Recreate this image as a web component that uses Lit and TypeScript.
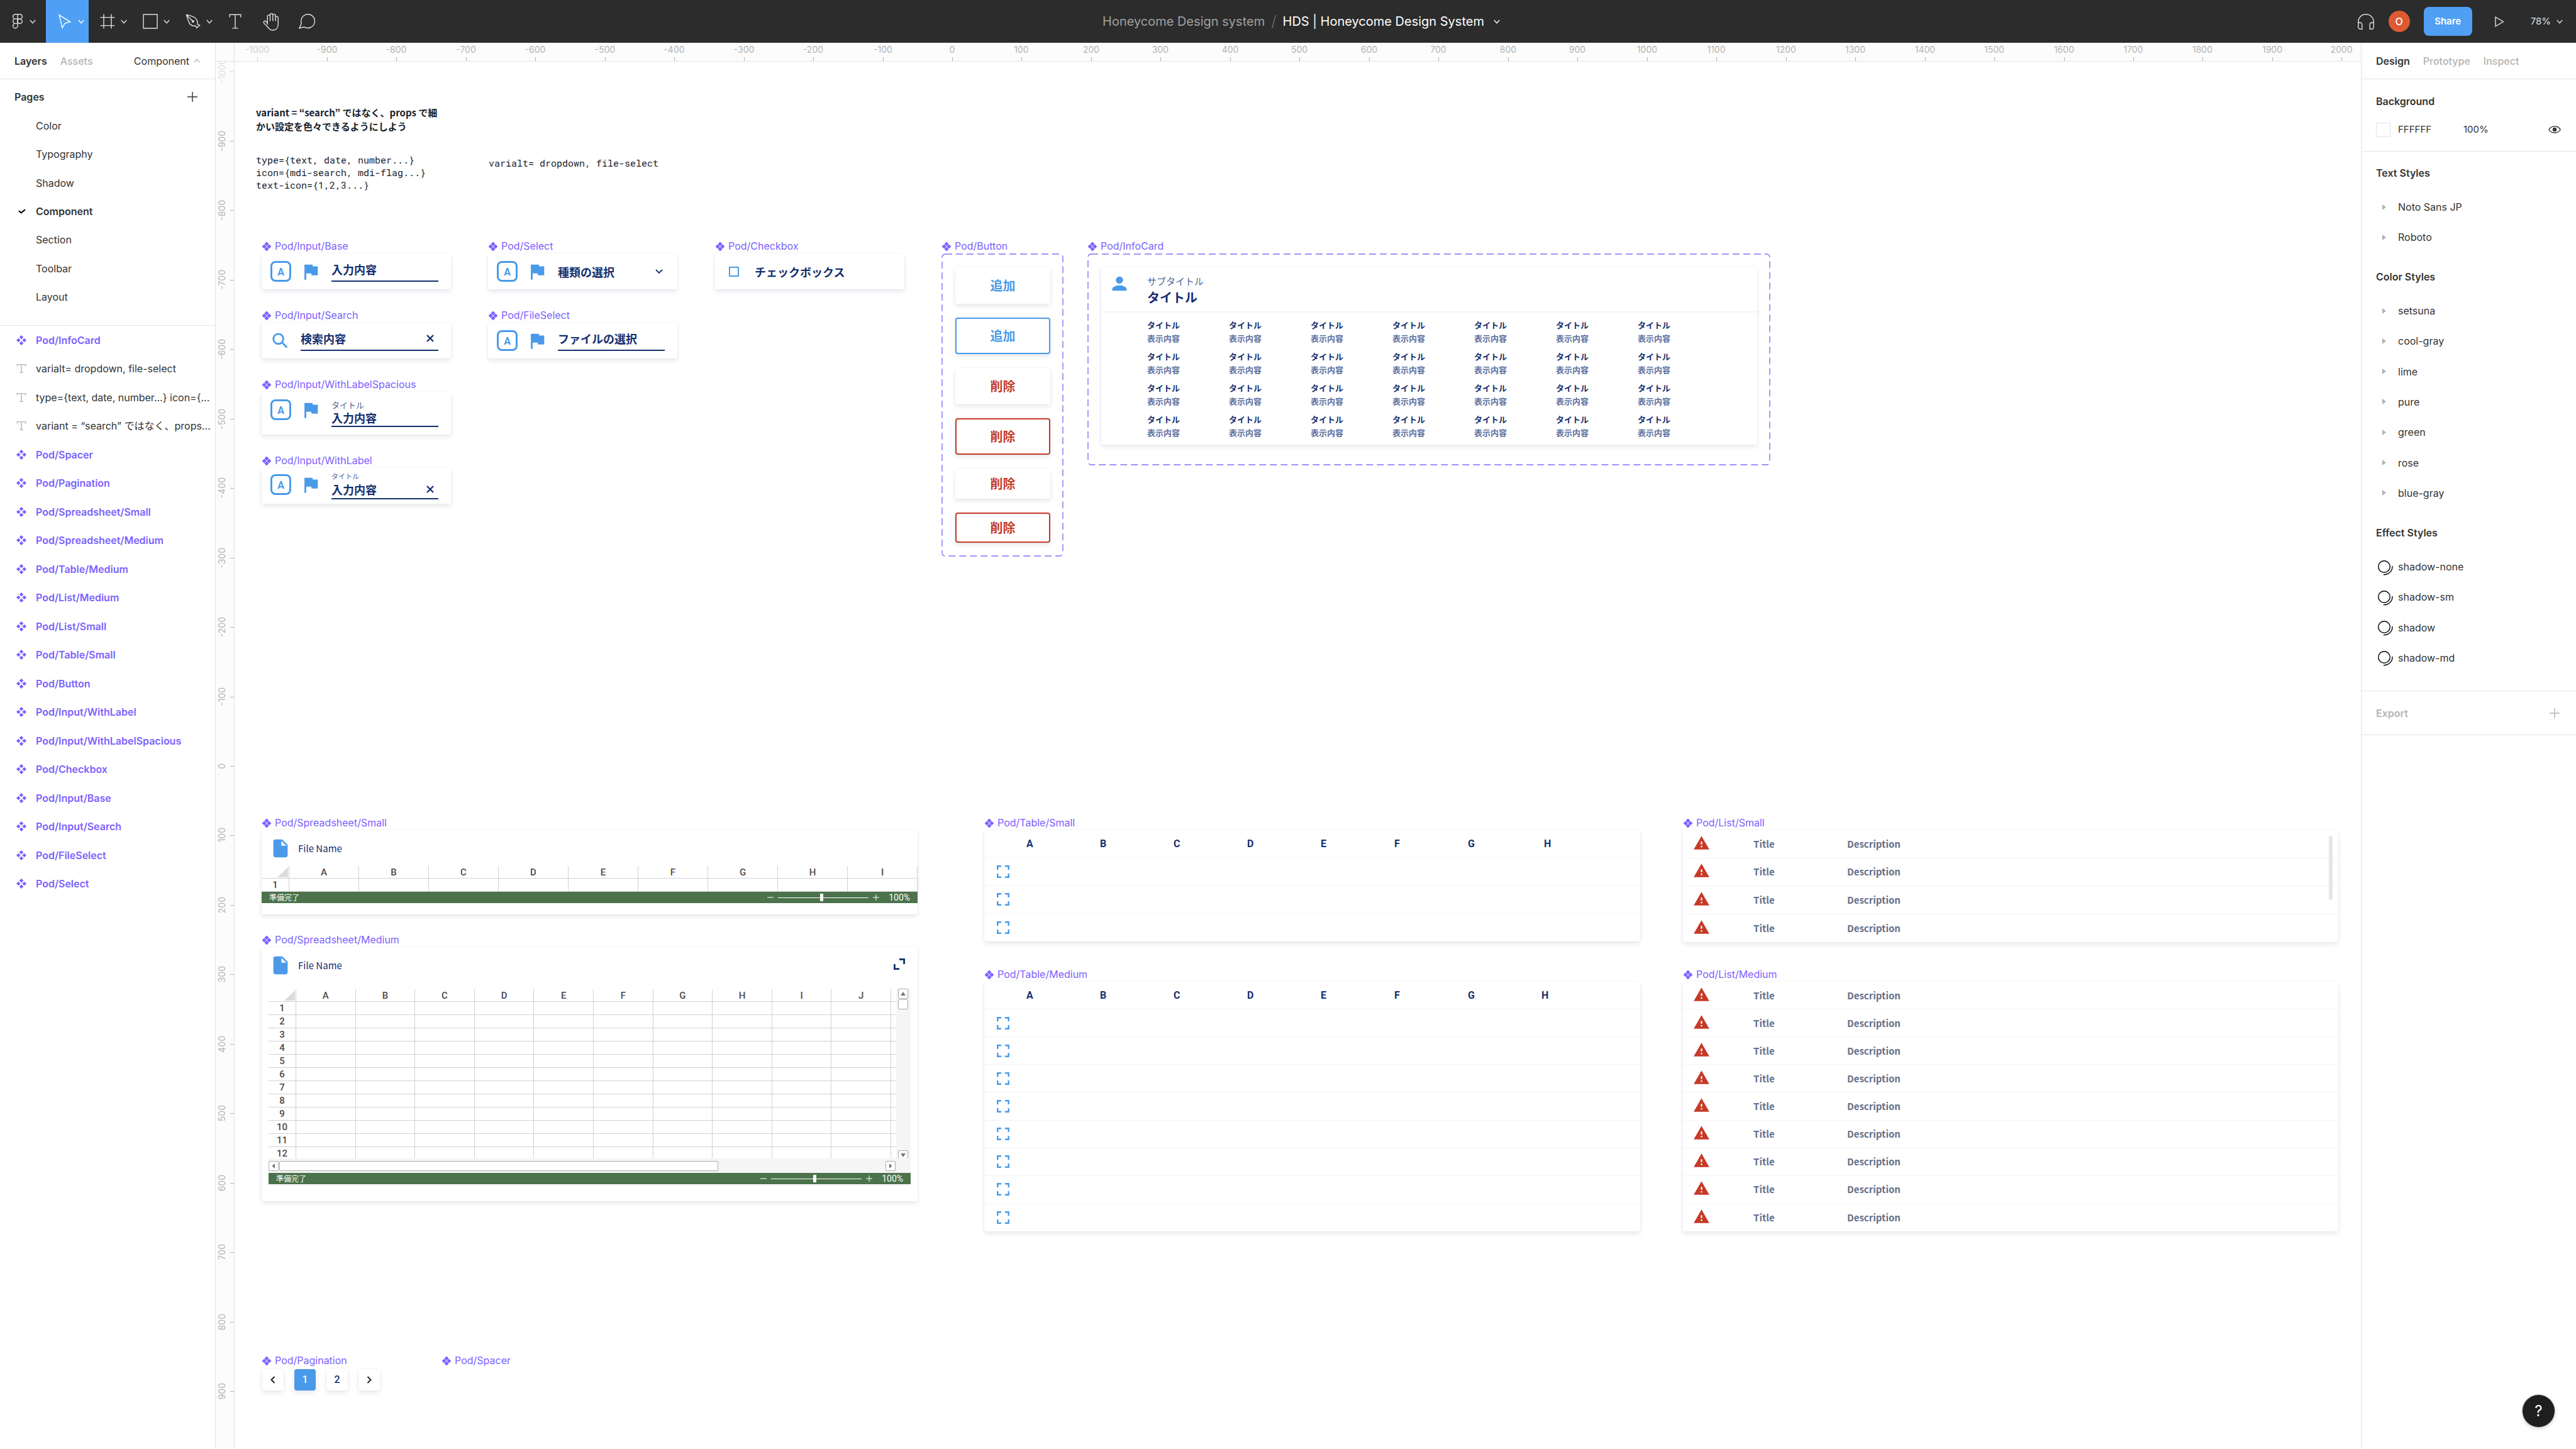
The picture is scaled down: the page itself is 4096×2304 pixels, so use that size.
import { LitElement, html, svg, css, nothing, TemplateResult } from "lit";
import { customElement, property } from "lit/decorators.js";
import { classMap } from "lit/directives/class-map.js";

/* ---------- data ---------- */

const PAGES = ["Color", "Typography", "Shadow", "Component", "Section", "Toolbar", "Layout"];

const LAYERS: { kind: "component" | "text"; name: string }[] = [
  { kind: "component", name: "Pod/InfoCard" },
  { kind: "text", name: "varialt= dropdown, file-select" },
  { kind: "text", name: "type={text, date, number...} icon={..." },
  { kind: "text", name: "variant = “search” ではなく、props..." },
  ...[
    "Spacer", "Pagination", "Spreadsheet/Small", "Spreadsheet/Medium", "Table/Medium",
    "List/Medium", "List/Small", "Table/Small", "Button", "Input/WithLabel",
    "Input/WithLabelSpacious", "Checkbox", "Input/Base", "Input/Search", "FileSelect", "Select",
  ].map((n) => ({ kind: "component" as const, name: `Pod/${n}` })),
];

const TEXT_STYLES = ["Noto Sans JP", "Roboto"];
const COLOR_STYLES = ["setsuna", "cool-gray", "lime", "pure", "green", "rose", "blue-gray"];
const EFFECT_STYLES = ["shadow-none", "shadow-sm", "shadow", "shadow-md"];

/* Canvas units to screen pixels. */
const UNIT = 1.1047;
const ORIGIN_X = 1141;
const ORIGIN_Y = 1120;
const range = (n: number) => Array.from({ length: n }, (_, i) => i);
const X_MARKS = range(31).map((i) => i * 100 - 1000);
const Y_MARKS = range(20).map((i) => i * 100 - 1000);
const letters = (n: number) => range(n).map((i) => String.fromCharCode(65 + i));

/* ---------- icons ---------- */

const diamond = (cx: number, cy: number, r: number) =>
  svg`<path d="M${cx} ${cy - r}L${cx + r} ${cy}L${cx} ${cy + r}L${cx - r} ${cy}Z"></path>`;

const componentIcon = (spread: number, r: number) => html`
  <svg class="ico-component" width="16" height="16" viewBox="0 0 16 16" aria-hidden="true">
    ${diamond(8, 8 - spread, r)}${diamond(8, 8 + spread, r)}${diamond(8 - spread, 8, r)}${diamond(8 + spread, 8, r)}
  </svg>`;

const chevron = html`
  <svg class="line" width="10" height="7" viewBox="0 0 10 7" aria-hidden="true"><path d="M.8 1L5 5.6 9.2 1"></path></svg>`;

const caretUp = html`
  <svg class="line faint" width="10" height="7" viewBox="0 0 10 7" aria-hidden="true"><path d="M.8 6L5 1.2 9.2 6"></path></svg>`;

const plus = html`
  <svg class="line" width="16" height="16" viewBox="0 0 16 16" aria-hidden="true"><path d="M8 0v16M0 8h16"></path></svg>`;

const textGlyph = html`
  <svg class="line faint" width="16" height="16" viewBox="0 0 16 16" aria-hidden="true"><path d="M1.4 4.6V1.6h13.2v3M8 1.6v12.9M5.2 14.4h5.6"></path></svg>`;

const tick = html`
  <svg width="12" height="8" viewBox="0 0 12 8" aria-hidden="true"><path d="M1 3.2l3.6 3.2L11 1.2" fill="none" stroke="#000" stroke-width="2.1"></path></svg>`;

const triangle = html`
  <svg class="tri" width="6" height="9" viewBox="0 0 6 9" aria-hidden="true"><path d="M0 0l6 4.5L0 9z"></path></svg>`;

const effectIcon = html`
  <svg class="line dark" width="24" height="24" viewBox="0 0 24 24" aria-hidden="true">
    <circle cx="10" cy="10" r="9.3"></circle><path d="M22.9 9c.6 7.5-5.400 14-14 13.800"></path>
  </svg>`;

const glyph = (d: string) => html`<svg class="glyph" width="34" height="34" viewBox="0 0 24 24" aria-hidden="true"><path d=${d}></path></svg>`;
const flagIcon = glyph("M14.400 6L14 4H5v17h2v-7h5.600l.400 2h7V6z");
const personIcon = glyph("M12 12c2.210 0 4-1.790 4-4s-1.790-4-4-4-4 1.790-4 4 1.790 4 4 4zm0 2c-2.670 0-8 1.340-8 4v2h16v-2c0-2.660-5.330-4-8-4z");
const fileIcon = glyph("M6 2c-1.100 0-2 .900-2 2v16c0 1.100.900 2 2 2h12c1.100 0 2-.900 2-2V8l-6-6H6zm7 7V3.500L18.500 9H13z");

const searchIcon = html`
  <svg class="search" width="34" height="34" viewBox="0 0 34 34" aria-hidden="true">
    <circle cx="12.600" cy="13.800" r="7.900"></circle><path d="M18.400 19.600l7.200 7.200"></path>
  </svg>`;

const crossIcon = html`
  <svg class="cross" width="12" height="12" viewBox="0 0 12 12" aria-hidden="true"><path d="M1 1l10 10M11 1L1 11"></path></svg>`;

const warnIcon = html`
  <svg class="warn" width="27" height="27" viewBox="0 0 24 24" aria-hidden="true"><path d="M1 21h22L12 2 1 21zm12-3h-2v-2h2v2zm0-4h-2v-4h2v4z"></path></svg>`;

const scanIcon = html`
  <svg class="scan" width="20" height="20" viewBox="0 0 20 20" aria-hidden="true">
    <path d="M1.300 7V1.300H7M13 1.300h5.700V7M18.700 13v5.700H13M7 18.700H1.300V13"></path>
  </svg>`;

const expandIcon = html`
  <svg class="expand" width="18" height="18" viewBox="0 0 18 18" aria-hidden="true"><path d="M9 1.400h7.600V9M1.400 9v7.600H9"></path></svg>`;

const tools: { name: string; icon: TemplateResult; menu: boolean; active?: boolean }[] = [
  {
    name: "Main menu", menu: true,
    icon: html`<svg class="line" width="16" height="24" viewBox="0 0 16 24">
      <path d="M8 .800H4.300a3.600 3.600 0 0 0 0 7.300H8zM8 .800h3.700a3.600 3.600 0 0 1 0 7.300H8M8 8.100H4.300a3.600 3.600 0 0 0 0 7.300H8zM8 15.400H4.300A3.700 3.700 0 1 0 8 19.200z"></path><circle cx="11.600" cy="11.800" r="3.700"></circle></svg>`,
  },
  {
    name: "Move", menu: true, active: true,
    icon: html`<svg class="line" width="24" height="24" viewBox="0 0 24 24"><path d="M3.200 1.800l17.600 11-8.700 2.300L8 22.300z"></path></svg>`,
  },
  {
    name: "Frame", menu: true,
    icon: html`<svg class="line" width="24" height="24" viewBox="0 0 24 24"><path d="M6 .600v22.800M18 .600v22.800M.600 5.600h22.800M.600 18.600h22.800"></path></svg>`,
  },
  {
    name: "Rectangle", menu: true,
    icon: html`<svg class="line" width="24" height="24" viewBox="0 0 24 24"><path d="M1 1h22v22H1z"></path></svg>`,
  },
  {
    name: "Pen", menu: true,
    icon: html`<svg class="line" width="24" height="24" viewBox="0 0 24 24"><path d="M1.200 1.200c4.500 1 8.500 1.800 12.800 4.300 3.600 2.300 5.800 6.300 5 11.200l3.600 1.600-4.700 4.200-1.900-3.400c-5 .700-8-.600-10-4.700C4 10.500 2.800 6 1.200 1.200l9.600 9.800"></path><circle class="fill" cx="11.800" cy="12" r="2"></circle></svg>`,
  },
  {
    name: "Text", menu: false,
    icon: html`<svg class="line" width="20" height="24" viewBox="0 0 20 24"><path d="M1.200 5.500V1.200h17.600v4.300M10 1.200v21.600M5.400 22.900h9.200"></path></svg>`,
  },
  {
    name: "Hand", menu: false,
    icon: html`<svg class="line" width="26" height="29" viewBox="0 0 26 29"><path d="M7.300 19V6a2.100 2.100 0 0 1 4.200 0v7.500M11.500 6V3.200a2.200 2.200 0 0 1 4.300 0v10.300M15.800 4.800a2.100 2.100 0 0 1 4.300 0v9M20.100 8.200a2.100 2.100 0 0 1 4.200 0V18c0 6.300-3.400 10-8.800 10-3.900 0-6-1.900-7.900-5.300l-5.800-5.800c-1.900-2.900 1.700-4.600 3.300-2.700L7.300 17"></path></svg>`,
  },
  {
    name: "Comment", menu: false,
    icon: html`<svg class="line" width="26" height="24" viewBox="0 0 26 24"><path d="M1 22.900l3.300-7.600a10.900 10.900 0 1 1 4.400 5.500z"></path></svg>`,
  },
];

/* ---------- labelled frame on the canvas ---------- */

@customElement("pod-frame")
export class PodFrame extends LitElement {
  @property() name = "";
  @property({ type: Boolean }) dashed = false;

  static styles = css`
    :host { display: block; position: absolute; }
    .label {
      display: flex; align-items: center; gap: 5px; height: 23px; white-space: nowrap;
      font: 400 16px/23px Inter, "Liberation Sans", sans-serif; color: #7b61ff;
    }
    .ico-component { fill: #7b61ff; flex: none; }
    .body { position: relative; }
    .dashes { position: absolute; inset: 0; width: 100%; height: 100%; pointer-events: none; }
    .dashes rect {
      x: 1px; y: 1px; width: calc(100% - 2px); height: calc(100% - 2px);
      fill: none; stroke: #8a6cf5; stroke-width: 1.4px; stroke-dasharray: 11 6;
    }
  `;

  render() {
    return html`
      <div class="label">${componentIcon(3.9, 3.5)}<span>${this.name}</span></div>
      <div class="body">
        <slot></slot>
        ${this.dashed ? html`<svg class="dashes" aria-hidden="true"><rect rx="5"></rect></svg>` : nothing}
      </div>`;
  }
}

/* ---------- page ---------- */

@customElement("app-root")
export class AppRoot extends LitElement {
  static styles = css`
    :host {
      --ink: #333; --faint: #b3b3b3; --rule: #e3e3e3; --accent: #4f9ff5; --blue: #4a9ae9;
      --navy: #142f6e; --slate: #4f6496; --red: #c63a28; --violet: #7b61ff;
      display: grid; grid-template-rows: 68px minmax(0, 1fr); height: 100vh; overflow: hidden;
      background: #fff; color: var(--ink);
      font: 400 16px/24px Inter, "Noto Sans CJK JP", sans-serif;
    }
    * { box-sizing: border-box; }
    svg { display: block; flex: none; }
    button, input, select { font: inherit; color: inherit; border: 0; background: none; padding: 0; margin: 0; border-radius: 0; }
    button { cursor: pointer; }
    ul { list-style: none; margin: 0; padding: 0; }
    h2 { margin: 0; font-size: 16px; font-weight: 600; line-height: 22px; }
    .line { fill: none; stroke: currentColor; stroke-width: 1.4; }
    .line .fill { fill: currentColor; stroke: none; }
    .faint { color: var(--faint); }
    .dark { color: #000; }

    /* top bar */
    .topbar { display: grid; grid-template-columns: 1fr auto 1fr; background: #2c2c2c; color: #e0e0e0; }
    .tools { display: flex; }
    .tool { display: flex; align-items: center; justify-content: center; gap: 9px; width: 57px; height: 68px; }
    .tool.menu { width: 68px; padding-left: 11px; }
    .tool.main { width: 73px; gap: 11px; padding-left: 3px; }
    .tool.active { background: var(--accent); color: #fff; }
    .title { display: flex; align-items: center; gap: 10px; padding-left: 42px; font-size: 20px; }
    .crumb { color: #a0a0a0; text-decoration: none; }
    .slash { color: #6e6e6e; font-size: 24px; font-weight: 300; }
    .file { display: flex; align-items: center; gap: 15px; color: #fff; }
    .session { display: flex; align-items: center; justify-content: flex-end; padding-right: 21px; }
    .avatar { display: grid; place-items: center; width: 34px; height: 34px; margin: 0 22px 0 23px; border-radius: 50%; background: #dd5a33; color: #fff; font-size: 16px; font-weight: 500; }
    .share { width: 77px; height: 46px; border-radius: 8px; background: var(--accent); color: #fff; font-size: 15px; font-weight: 600; }
    .play { margin: 0 42px 0 36px; }
    .zoom { display: flex; align-items: center; gap: 9px; font-size: 15px; }

    .workspace { display: grid; grid-template-columns: 343px minmax(0, 1fr) 342px; min-height: 0; }

    /* left panel */
    .left { border-right: 1px solid var(--rule); min-width: 0; }
    .tabs { display: flex; align-items: center; height: 58px; padding: 0 24px 0 23px; gap: 21px; border-bottom: 1px solid var(--rule); color: var(--faint); font-weight: 500; }
    .tabs .on { color: var(--ink); font-weight: 600; }
    .page-pick { display: flex; align-items: center; gap: 7px; margin-left: auto; color: var(--ink); font-weight: 400; }
    .pages-head { display: flex; align-items: center; justify-content: space-between; height: 51px; padding: 5px 28px 0 23px; }
    .pages { display: grid; grid-auto-rows: 1fr; height: 341px; padding-bottom: 22px; border-bottom: 1px solid var(--rule); }
    .layers { display: grid; grid-auto-rows: 1fr; height: 910px; }
    .row { display: grid; grid-template-columns: 33px minmax(0, 1fr); align-items: center; width: 100%; height: 100%; padding: 0 6px 0 24px; text-align: left; }
    .row-icon { display: flex; align-items: center; padding-left: 2px; }
    .row-icon.check { padding-left: 5px; }
    .row-name { overflow: hidden; text-overflow: ellipsis; white-space: nowrap; }
    .row.current { font-weight: 600; }
    .row.component { color: var(--violet); font-weight: 600; }
    .ico-component { fill: var(--violet); }

    /* canvas and rulers */
    .canvas { display: grid; grid-template: 30px minmax(0, 1fr) / 30px minmax(0, 1fr); min-width: 0; min-height: 0; }
    .ruler { position: relative; overflow: hidden; background: #fcfcfc; color: var(--faint); font-size: 14px; line-height: 16px; }
    .corner, .ruler.x { border-bottom: 1px solid var(--rule); }
    .corner, .ruler.y { border-right: 1px solid var(--rule); }
    .corner { background: #fcfcfc; }
    .mark { position: absolute; display: flex; align-items: center; justify-content: space-between; }
    .ruler.x .mark { top: 3px; bottom: 0; width: 60px; margin-left: -30px; flex-direction: column; }
    .ruler.x .mark::after { content: ""; width: 1px; height: 6px; background: #b0b0b0; }
    .ruler.y .mark { left: 2px; right: 0; height: 60px; margin-top: -30px; }
    .ruler.y .mark::after { content: ""; width: 6px; height: 1px; background: #b0b0b0; }
    .ruler.y .mark span { writing-mode: vertical-rl; transform: rotate(180deg); }
    .mark.dim { opacity: 0.6; }
    .ruler.y .mark.dim { opacity: 0.4; }
    .board { position: relative; overflow: hidden; font-family: "Noto Sans CJK JP", sans-serif; }
    .note { position: absolute; margin: 0; white-space: pre; color: #161e2e; font-size: 15px; line-height: 20px; }
    .note.head { font-weight: 700; line-height: 22px; }
    .note.mono { font-family: "Roboto Mono", "DejaVu Sans Mono", "Liberation Mono", monospace; }

    .card { background: #fff; border-radius: 4px; box-shadow: 0 4px 7px rgba(23, 43, 87, 0.09), 0 0 4px rgba(23, 43, 87, 0.05); }

    /* fields */
    .field-card { display: flex; align-items: center; gap: 16px; height: 57px; padding: 0 20px 0 14px; color: var(--navy); font-size: 18px; font-weight: 700; }
    .field-card.spacious { height: 68px; align-items: flex-start; padding-top: 12px; }
    .field-card.labelled { align-items: flex-start; padding-top: 10px; }
    .badge { display: grid; place-items: center; flex: none; width: 33px; height: 33px; margin-right: -2px; padding-top: 2px; border: 3px solid var(--blue); border-radius: 8px; color: var(--blue); font: 700 16px/18px Roboto, sans-serif; }
    .glyph { fill: var(--blue); }
    .search { fill: none; stroke: var(--blue); stroke-width: 2.8; stroke-linecap: round; margin-right: -2px; }
    .cross { fill: none; stroke: var(--navy); stroke-width: 2.3; }
    .field { display: flex; align-items: center; flex: 1; min-width: 0; height: 33px; padding: 0 7px 5px 0; border-bottom: 2px solid var(--navy); text-align: left; }
    .field input { flex: 1; min-width: 0; width: 0; line-height: 24px; }
    .stack { display: flex; flex-direction: column; flex: 1; min-width: 0; }
    .stack label { color: var(--slate); font-weight: 400; font-size: 13px; line-height: 17px; }
    .stack .field { flex: none; height: 27px; padding-bottom: 1px; }
    .labelled .stack { margin-top: -5px; }
    .labelled .stack label { font-size: 11px; line-height: 16px; }
    .labelled .stack .field { height: 29px; padding-bottom: 2px; }
    .select-wrap { position: relative; display: flex; align-items: center; flex: 1; }
    .select-wrap select { appearance: none; width: 100%; font-weight: 700; }
    .select-wrap svg { position: absolute; right: 3px; stroke: var(--navy); stroke-width: 1.8; pointer-events: none; }
    .check-card { gap: 25px; padding-left: 22px; }
    .check-card input { appearance: none; width: 16px; height: 16px; border: 2px solid var(--blue); border-radius: 1px; }

    /* buttons */
    .button-set { display: flex; flex-direction: column; gap: 22px; padding: 22px 21px 22px 22px; }
    .pod-button { height: 58px; border-radius: 4px; font-size: 20px; font-weight: 700; color: var(--blue); }
    .pod-button.danger { color: var(--red); }
    .pod-button.outlined { border: 2px solid currentColor; }
    .pod-button.short { height: 48px; }

    /* info card */
    .info-wrap { padding: 22px 21px 33px 22px; }
    .info-head { display: flex; gap: 27px; height: 72px; padding: 9px 12px 0; border-bottom: 2px solid #f3f4f6; }
    .info-sub { color: var(--slate); font-size: 15px; line-height: 26px; }
    .info-title { color: #1b2a73; font-size: 20px; line-height: 26px; font-weight: 700; }
    .info-grid { display: grid; grid-template-columns: repeat(7, 130px); row-gap: 8px; margin: 0; padding: 9px 0 9px 73px; font-size: 13px; line-height: 21px; font-weight: 700; }
    .info-grid dt { color: var(--navy); }
    .info-grid dd { margin: 0; color: #5c70a0; }

    /* spreadsheets */
    .sheet { padding-bottom: 18px; }
    .sheet.medium { padding: 0 11px 27px; }
    .file-head { display: flex; align-items: center; gap: 11px; height: 57px; padding: 0 20px 0 13px; color: var(--navy); font-size: 15px; }
    .medium .file-head { padding: 0 9px 0 2px; margin-bottom: 9px; }
    .expand { fill: none; stroke: var(--navy); stroke-width: 2.8; }
    .expander { margin-left: auto; padding-bottom: 4px; }
    .cells { width: 100%; border-collapse: separate; border-spacing: 0; table-layout: fixed; color: #4a4a4a; font: 500 15px/18px Roboto, sans-serif; }
    .cells th, .cells td { height: 21px; padding: 0; border: solid #d2d2d2; border-width: 0 1px 1px 0; font-weight: 500; text-align: center; }
    .cells thead th { height: 20px; }
    .cells .rowhead { width: 44px; }
    .cells .rest { width: 8px; border-right: 0; }
    .fold { margin: 0 1px 0 auto; fill: #dcdcdc; }
    .sheet-area { display: grid; grid-template-columns: minmax(0, 1fr) 23px; height: 270px; overflow: hidden; }
    .sheet-area .cells { margin-top: 1px; }
    .bar-v { display: flex; flex-direction: column; align-items: center; gap: 1px; padding-right: 1px; background: #f5f5f5; }
    .bar-h { display: flex; align-items: center; gap: 1px; height: 23px; padding-right: 24px; background: #f5f5f5; }
    .scroll-btn { display: grid; place-items: center; width: 16px; height: 16px; background: #fff; border: 1px solid #ababab; border-radius: 2px; fill: #777; }
    .thumb-v { width: 16px; height: 16px; background: #fff; border: 1px solid #ababab; border-radius: 2px; }
    .thumb-h { width: 70%; height: 16px; background: #fff; border: 1px solid #ababab; border-radius: 2px; }
    .bar-v .last { margin-top: auto; }
    .bar-h .last { margin-left: auto; }
    .status { display: flex; align-items: center; height: 18px; padding: 0 12px; background: #4b724b; color: #fff; font-size: 12px; line-height: 18px; }
    .status .zoomer { display: flex; align-items: center; gap: 7px; margin-left: auto; stroke: #fff; }
    .status output { width: 34px; margin-left: 15px; text-align: right; font: 400 14px/18px Roboto, sans-serif; }
    .status input { appearance: none; width: 144px; height: 12px; background: linear-gradient(#fff, #fff) center / 100% 1px no-repeat; }
    .status input::-webkit-slider-thumb { appearance: none; width: 5px; height: 12px; background: #fff; }

    /* tables and lists */
    .grid-table { width: 100%; border-collapse: separate; border-spacing: 0; table-layout: fixed; color: var(--navy); }
    .grid-table.n3 { height: 177px; }
    .grid-table.n8 { height: 397px; }
    .grid-table th, .grid-table td { height: 44px; padding: 0; border-bottom: 1px solid #f3f4f6; text-align: left; }
    .grid-table th { font: 700 16px/24px Roboto, sans-serif; }
    .grid-table tr:last-child td { border-bottom: 0; }
    .grid-table .lead { width: 67px; padding-left: 20px; }
    .grid-table .col { width: 117px; }
    .grid-table .shift { padding-left: 4px; }
    .scan { fill: none; stroke: var(--blue); stroke-width: 2.4; }
    .list-card { position: relative; color: #64708a; font-size: 15px; font-weight: 700; }
    .list-card ul { display: grid; grid-auto-rows: 1fr; }
    .list-card .n4 { height: 178px; }
    .list-card .n9 { height: 397px; }
    .list-card li { display: grid; grid-template-columns: 96px 149px 1fr; align-items: center; padding-left: 16px; border-bottom: 1px solid #f3f4f6; }
    .list-card li:last-child { border-bottom: 0; }
    .list-card .warn { margin-bottom: 3px; }
    .warn { fill: var(--red); }
    .list-thumb { position: absolute; top: 9px; right: 9px; width: 6px; height: 102px; border-radius: 3px; background: #e4e6eb; }

    /* pagination */
    .pager { display: flex; gap: 17px; padding: 2px 0 0 1px; }
    .pager button { display: grid; place-items: center; width: 34px; height: 34px; color: var(--navy); font: 500 16px/24px Roboto, sans-serif; }
    .pager .on { background: var(--blue); color: #fff; }
    .pager svg { fill: none; stroke: #222; stroke-width: 2; }

    /* right panel */
    .right { border-left: 1px solid var(--rule); position: relative; }
    .section { border-bottom: 1px solid var(--rule); }
    .background { height: 115px; padding: 24px 24px 0 23px; }
    .fill-row { display: grid; grid-template-columns: 35px 104px 1fr auto; align-items: center; margin-top: 22px; font-size: 15px; }
    .fill-row input { width: 70px; height: 24px; }
    .swatch { width: 23px; height: 23px; border: 1px solid #e3e3e3; background: #fff; }
    .styles { display: flex; flex-direction: column; gap: 28px; padding: 23px 0 28px 23px; }
    .styles h2 { margin-bottom: 19px; }
    .style-list { display: grid; grid-auto-rows: 1fr; }
    .style-list.n2 { height: 96px; }
    .style-list.n7 { height: 338px; }
    .style-list.n4 { height: 193px; }
    .style-list button { display: grid; grid-template-columns: 35px 1fr; align-items: center; width: 100%; height: 100%; text-align: left; }
    .tri { fill: #b3b3b3; margin-left: 10px; }
    .style-list .dark { margin: 3px 0 0 3px; }
    .export { display: flex; align-items: center; justify-content: space-between; height: 70px; padding: 0 26px 0 23px; color: var(--faint); }
    .help { position: absolute; right: 34px; bottom: 35px; width: 51px; height: 51px; border-radius: 50%; background: #1e1e1e; color: #fff; font-size: 24px; box-shadow: 0 0 0 1px rgba(0, 0, 0, 0.15), 0 2px 6px rgba(0, 0, 0, 0.2); }
  `;

  private frame(name: string, x: number, y: number, w: number, body: unknown, dashed = false) {
    return html`<pod-frame name=${name} ?dashed=${dashed} style="left:${x}px;top:${y}px;width:${w}px">${body}</pod-frame>`;
  }

  private topbar() {
    return html`
      <header class="topbar">
        <div class="tools">
          ${tools.map((t, i) => html`
            <button class=${classMap({ tool: true, menu: t.menu, main: i === 0, active: !!t.active })} aria-label=${t.name}>
              ${t.icon}${t.menu ? chevron : nothing}
            </button>`)}
        </div>
        <div class="title">
          <a class="crumb" href="#project">Honeycome Design system</a>
          <span class="slash">/</span>
          <button class="file">HDS | Honeycome Design System ${chevron}</button>
        </div>
        <div class="session">
          <button aria-label="Audio">
            <svg class="line" width="26" height="25" viewBox="0 0 26 25">
              <path d="M.8 20.500V12.500a12.200 11.700 0 0 1 24.400 0v8M.8 14h3a3 3 0 0 1 3 3v7.200h-2.700a3.300 3.300 0 0 1-3.300-3.300zM25.200 14h-3a3 3 0 0 0-3 3v7.200h2.700a3.300 3.300 0 0 0 3.300-3.300z"></path>
            </svg>
          </button>
          <span class="avatar">O</span>
          <button class="share">Share</button>
          <button class="play" aria-label="Present">
            <svg class="line" width="15" height="17" viewBox="0 0 15 17"><path d="M1 1.200L13.500 8.500 1 15.800z"></path></svg>
          </button>
          <button class="zoom">78% ${chevron}</button>
        </div>
      </header>`;
  }

  private leftPanel() {
    return html`
      <aside class="left">
        <div class="tabs">
          <button class="on">Layers</button>
          <button>Assets</button>
          <button class="page-pick">Component ${caretUp}</button>
        </div>
        <div class="pages-head"><h2>Pages</h2><button aria-label="Add page">${plus}</button></div>
        <ul class="pages">
          ${PAGES.map((p) => html`
            <li><button class=${classMap({ row: true, current: p === "Component" })}>
              <span class="row-icon check">${p === "Component" ? tick : nothing}</span>
              <span class="row-name">${p}</span>
            </button></li>`)}
        </ul>
        <ul class="layers">
          ${LAYERS.map((l) => html`
            <li><button class=${classMap({ row: true, component: l.kind === "component" })}>
              <span class="row-icon">${l.kind === "component" ? componentIcon(4.7, 3.3) : textGlyph}</span>
              <span class="row-name">${l.name}</span>
            </button></li>`)}
        </ul>
      </aside>`;
  }

  private badge = html`<span class="badge">A</span>`;

  private fields() {
    const clear = html`<button aria-label="Clear">${crossIcon}</button>`;
    return html`
      ${this.frame("Pod/Input/Base", 43, 282, 301, html`
        <div class="card field-card">${this.badge}${flagIcon}
          <span class="field"><input aria-label="Base" value="入力内容"></span></div>`)}
      ${this.frame("Pod/Input/Search", 43, 392, 301, html`
        <div class="card field-card">${searchIcon}
          <span class="field"><input aria-label="Search" value="検索内容">${clear}</span></div>`)}
      ${this.frame("Pod/Input/WithLabelSpacious", 43, 502, 301, html`
        <div class="card field-card spacious">${this.badge}${flagIcon}
          <div class="stack"><label for="spacious">タイトル</label>
            <span class="field"><input id="spacious" value="入力内容"></span></div></div>`)}
      ${this.frame("Pod/Input/WithLabel", 43, 623, 301, html`
        <div class="card field-card labelled">${this.badge}${flagIcon}
          <div class="stack"><label for="labelled">タイトル</label>
            <span class="field"><input id="labelled" value="入力内容">${clear}</span></div></div>`)}
      ${this.frame("Pod/Select", 403, 282, 301, html`
        <div class="card field-card">${this.badge}${flagIcon}
          <div class="select-wrap"><select aria-label="Kind"><option>種類の選択</option></select>
            <svg class="line" width="12" height="8" viewBox="0 0 12 8"><path d="M1 1l5 5 5-5"></path></svg></div></div>`)}
      ${this.frame("Pod/FileSelect", 403, 392, 301, html`
        <div class="card field-card">${this.badge}${flagIcon}
          <button class="field">ファイルの選択</button></div>`)}
      ${this.frame("Pod/Checkbox", 764, 282, 301, html`
        <label class="card field-card check-card"><input type="checkbox">チェックボックス</label>`)}`;
  }

  private buttons() {
    const kinds = [
      ["追加", ""], ["追加", "outlined"], ["削除", "danger"], ["削除", "danger outlined"],
      ["削除", "danger short"], ["削除", "danger outlined short"],
    ];
    return this.frame("Pod/Button", 1124, 282, 194, html`
      <div class="button-set">
        ${kinds.map(([text, kind]) => html`<button class="card pod-button ${kind}">${text}</button>`)}
      </div>`, true);
  }

  private infoCard() {
    return this.frame("Pod/InfoCard", 1356, 282, 1086, html`
      <div class="info-wrap"><div class="card">
        <div class="info-head">${personIcon}
          <div><div class="info-sub">サブタイトル</div><div class="info-title">タイトル</div></div>
        </div>
        <dl class="info-grid">
          ${range(28).map(() => html`<div><dt>タイトル</dt><dd>表示内容</dd></div>`)}
        </dl>
      </div></div>`, true);
  }

  private statusBar() {
    return html`
      <div class="status">
        <span>準備完了</span>
        <span class="zoomer">
          <svg width="10" height="10" viewBox="0 0 10 10"><path d="M0 5h10"></path></svg>
          <input type="range" min="0" max="100" value="48" aria-label="Zoom">
          <svg width="10" height="10" viewBox="0 0 10 10"><path d="M0 5h10M5 0v10"></path></svg>
        </span>
        <output>100%</output>
      </div>`;
  }

  private cells(cols: number, rows: number, rest: boolean) {
    return html`
      <table class="cells">
        <thead><tr>
          <th class="rowhead"><svg class="fold" width="17" height="16" viewBox="0 0 17 16"><path d="M17 0v16H0z"></path></svg></th>
          ${letters(cols).map((c) => html`<th>${c}</th>`)}
          ${rest ? html`<th class="rest"></th>` : nothing}
        </tr></thead>
        <tbody>
          ${range(rows).map((r) => html`<tr><th>${r + 1}</th>
            ${range(cols).map(() => html`<td></td>`)}${rest ? html`<td class="rest"></td>` : nothing}</tr>`)}
        </tbody>
      </table>`;
  }

  private sheets() {
    const arrow = (d: string, cls = "") => html`
      <button class="scroll-btn ${cls}" aria-label="Scroll"><svg width="8" height="8" viewBox="0 0 8 8"><path d=${d}></path></svg></button>`;
    return html`
      ${this.frame("Pod/Spreadsheet/Small", 43, 1199, 1043, html`
        <div class="card sheet">
          <div class="file-head">${fileIcon}<span>File Name</span></div>
          ${this.cells(9, 1, false)}
          ${this.statusBar()}
        </div>`)}
      ${this.frame("Pod/Spreadsheet/Medium", 43, 1385, 1043, html`
        <div class="card sheet medium">
          <div class="file-head">${fileIcon}<span>File Name</span><button class="expander" aria-label="Expand">${expandIcon}</button></div>
          <div class="sheet-area">
            ${this.cells(10, 12, true)}
            <div class="bar-v">${arrow("M0 7L4 1l4 6z")}<span class="thumb-v"></span>${arrow("M0 1l4 6 4-6z", "last")}</div>
          </div>
          <div class="bar-h">${arrow("M6 0L1.500 4 6 8z")}<span class="thumb-h"></span>${arrow("M2 0l4.500 4L2 8z", "last")}</div>
          ${this.statusBar()}
        </div>`)}`;
  }

  private gridTable(rows: number, shift: boolean) {
    return html`
      <div class="card"><table class="grid-table n${rows}">
        <thead><tr><th class="lead"></th>
          ${letters(8).map((c) => html`<th class=${classMap({ col: true, shift: shift && c === "H" })}>${c}</th>`)}
          <th></th></tr></thead>
        <tbody>${range(rows).map(() => html`<tr><td class="lead">${scanIcon}</td><td colspan="9"></td></tr>`)}</tbody>
      </table></div>`;
  }

  private list(rows: number, thumb: boolean) {
    return html`
      <div class="card list-card">
        <ul class="n${rows}">${range(rows).map(() => html`<li>${warnIcon}<span>Title</span><span>Description</span></li>`)}</ul>
        ${thumb ? html`<span class="list-thumb"></span>` : nothing}
      </div>`;
  }

  private canvas() {
    return html`
      <main class="canvas">
        <div class="corner"></div>
        <div class="ruler x">
          ${X_MARKS.map((v) => html`<div class=${classMap({ mark: true, dim: v === -1000 })} style="left:${Math.round(ORIGIN_X + v * UNIT)}px"><span>${v}</span></div>`)}
        </div>
        <div class="ruler y">
          ${Y_MARKS.map((v) => html`<div class=${classMap({ mark: true, dim: v === -1000 })} style="top:${Math.round(ORIGIN_Y + v * UNIT)}px"><span>${v}</span></div>`)}
        </div>
        <div class="board">
          <p class="note head" style="left:34px;top:70px">variant = “search” ではなく、props で細
かい設定を色々できるようにしよう</p>
          <p class="note mono" style="left:34px;top:146px">type={text, date, number...}
icon={mdi-search, mdi-flag...}
text-icon={1,2,3...}</p>
          <p class="note mono" style="left:404px;top:151px">varialt= dropdown, file-select</p>
          ${this.fields()} ${this.buttons()} ${this.infoCard()} ${this.sheets()}
          ${this.frame("Pod/Table/Small", 1192, 1199, 1043, this.gridTable(3, true))}
          ${this.frame("Pod/Table/Medium", 1192, 1440, 1043, this.gridTable(8, false))}
          ${this.frame("Pod/List/Small", 2303, 1199, 1042, this.list(4, true))}
          ${this.frame("Pod/List/Medium", 2303, 1440, 1042, this.list(9, false))}
          ${this.frame("Pod/Pagination", 43, 2054, 188, html`
            <nav class="pager">
              <button class="card" aria-label="Previous"><svg width="8" height="12" viewBox="0 0 8 12"><path d="M6.500 1L1.500 6l5 5"></path></svg></button>
              <button class="card on">1</button><button class="card">2</button>
              <button class="card" aria-label="Next"><svg width="8" height="12" viewBox="0 0 8 12"><path d="M1.500 1l5 5-5 5"></path></svg></button>
            </nav>`)}
          ${this.frame("Pod/Spacer", 329, 2054, 120, nothing)}
        </div>
      </main>`;
  }

  private styleGroup(title: string, items: string[], icon: TemplateResult) {
    return html`
      <section>
        <h2>${title}</h2>
        <ul class="style-list n${items.length}">${items.map((s) => html`<li><button>${icon}<span>${s}</span></button></li>`)}</ul>
      </section>`;
  }

  private rightPanel() {
    return html`
      <aside class="right">
        <div class="tabs"><button class="on">Design</button><button>Prototype</button><button>Inspect</button></div>
        <section class="section background">
          <h2>Background</h2>
          <div class="fill-row">
            <span class="swatch"></span>
            <input aria-label="Color" value="FFFFFF">
            <input aria-label="Opacity" value="100%">
            <button aria-label="Toggle visibility">
              <svg class="line" width="20" height="12" viewBox="0 0 20 12"><path d="M.8 6C5-.9 15-.9 19.200 6 15 12.900 5 12.900.8 6z"></path><circle class="fill" cx="10" cy="6" r="3.200"></circle></svg>
            </button>
          </div>
        </section>
        <div class="section styles">
          ${this.styleGroup("Text Styles", TEXT_STYLES, triangle)}
          ${this.styleGroup("Color Styles", COLOR_STYLES, triangle)}
          ${this.styleGroup("Effect Styles", EFFECT_STYLES, effectIcon)}
        </div>
        <section class="section export"><h2>Export</h2><button aria-label="Add export">${plus}</button></section>
        <button class="help" aria-label="Help">?</button>
      </aside>`;
  }

  render() {
    return html`
      ${this.topbar()}
      <div class="workspace">${this.leftPanel()}${this.canvas()}${this.rightPanel()}</div>`;
  }
}
